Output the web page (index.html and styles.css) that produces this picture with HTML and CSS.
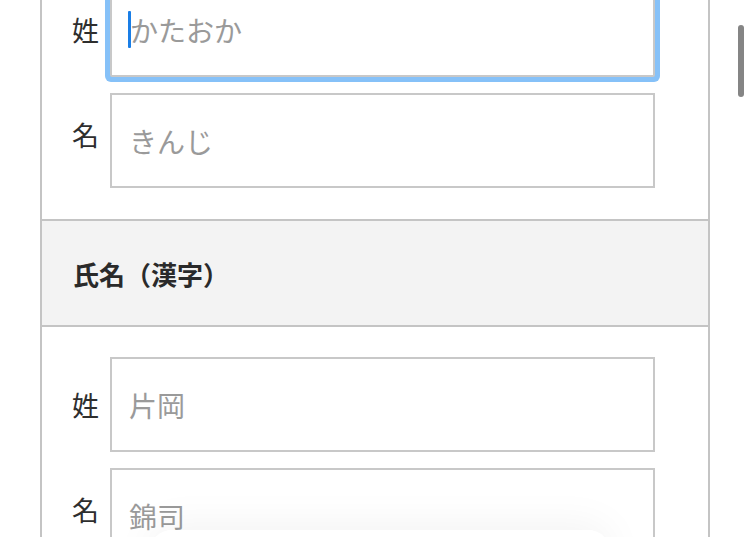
FILE: index.html
```html
<!DOCTYPE html>
<html lang="ja">
<head>
<meta charset="utf-8">
<title>氏名入力</title>
<link rel="stylesheet" href="styles.css">
</head>
<body>
<div class="panel">
  <div class="group group-first">
    <div class="row">
      <span class="label">姓</span>
      <div class="field field-focus"><span class="caret"></span><span class="ph">かたおか</span></div>
    </div>
    <div class="row">
      <span class="label label-name">名</span>
      <div class="field"><span class="ph">きんじ</span></div>
    </div>
  </div>
  <div class="section-head">氏名（漢字）</div>
  <div class="group">
    <div class="row">
      <span class="label">姓</span>
      <div class="field"><span class="ph">片岡</span></div>
    </div>
    <div class="row">
      <span class="label label-name">名</span>
      <div class="field"><span class="ph">錦司</span></div>
    </div>
  </div>
</div>
<div class="scroll-thumb"></div>
<div class="toolbar"></div>
</body>
</html>
```

FILE: styles.css
```css
html, body {
  margin: 0;
  padding: 0;
  background: #ffffff;
  overflow: hidden;
  height: 100%;
}
body {
  font-family: "Noto Sans CJK JP", "Noto Sans", sans-serif;
  color: #333333;
}
.panel {
  margin: -18px 0 0 40px;
  width: 670px;
  box-sizing: border-box;
  border-left: 2px solid #c4c4c4;
  border-right: 2px solid #c4c4c4;
  min-height: 700px;
}
.group {
  display: flex;
  flex-direction: column;
  gap: 16px;
  padding: 30px 53px 31px 30px;
}
.group-first {
  padding-top: 0;
}
.row {
  display: flex;
  align-items: center;
  gap: 10px;
}
.label {
  width: 28px;
  font-size: 27px;
  line-height: 1;
  color: #2e2e2e;
}
.label-name {
  margin-bottom: 12px;
}
.field {
  flex: 1;
  height: 95px;
  box-sizing: border-box;
  border: 2px solid #c8c8c8;
  display: flex;
  align-items: center;
  padding-left: 17px;
  background: #ffffff;
}
.field-focus {
  box-shadow: 0 0 0 5px #86c1f8;
  border-radius: 2px;
  padding-left: 16px;
}
.caret {
  width: 3px;
  height: 37px;
  background: #1a7ee6;
  border-radius: 1px;
  margin-right: -1px;
}
.ph {
  font-size: 28px;
  line-height: 1;
  color: #9a9a9a;
}
.section-head {
  border-top: 2px solid #c4c4c4;
  border-bottom: 2px solid #c4c4c4;
  background: #f3f3f3;
  height: 108px;
  box-sizing: border-box;
  display: flex;
  align-items: center;
  padding-left: 31px;
  font-size: 26px;
  font-weight: 700;
  color: #2a2a2a;
}
.scroll-thumb {
  position: fixed;
  left: 738px;
  top: 25px;
  width: 6px;
  height: 72px;
  border-radius: 3px;
  background: #858585;
}
.toolbar {
  position: fixed;
  left: 150px;
  top: 530px;
  width: 460px;
  height: 60px;
  border-radius: 22px;
  background: rgba(255, 255, 255, 0.92);
  box-shadow: 0 -6px 40px rgba(0, 0, 0, 0.05);
}
```
